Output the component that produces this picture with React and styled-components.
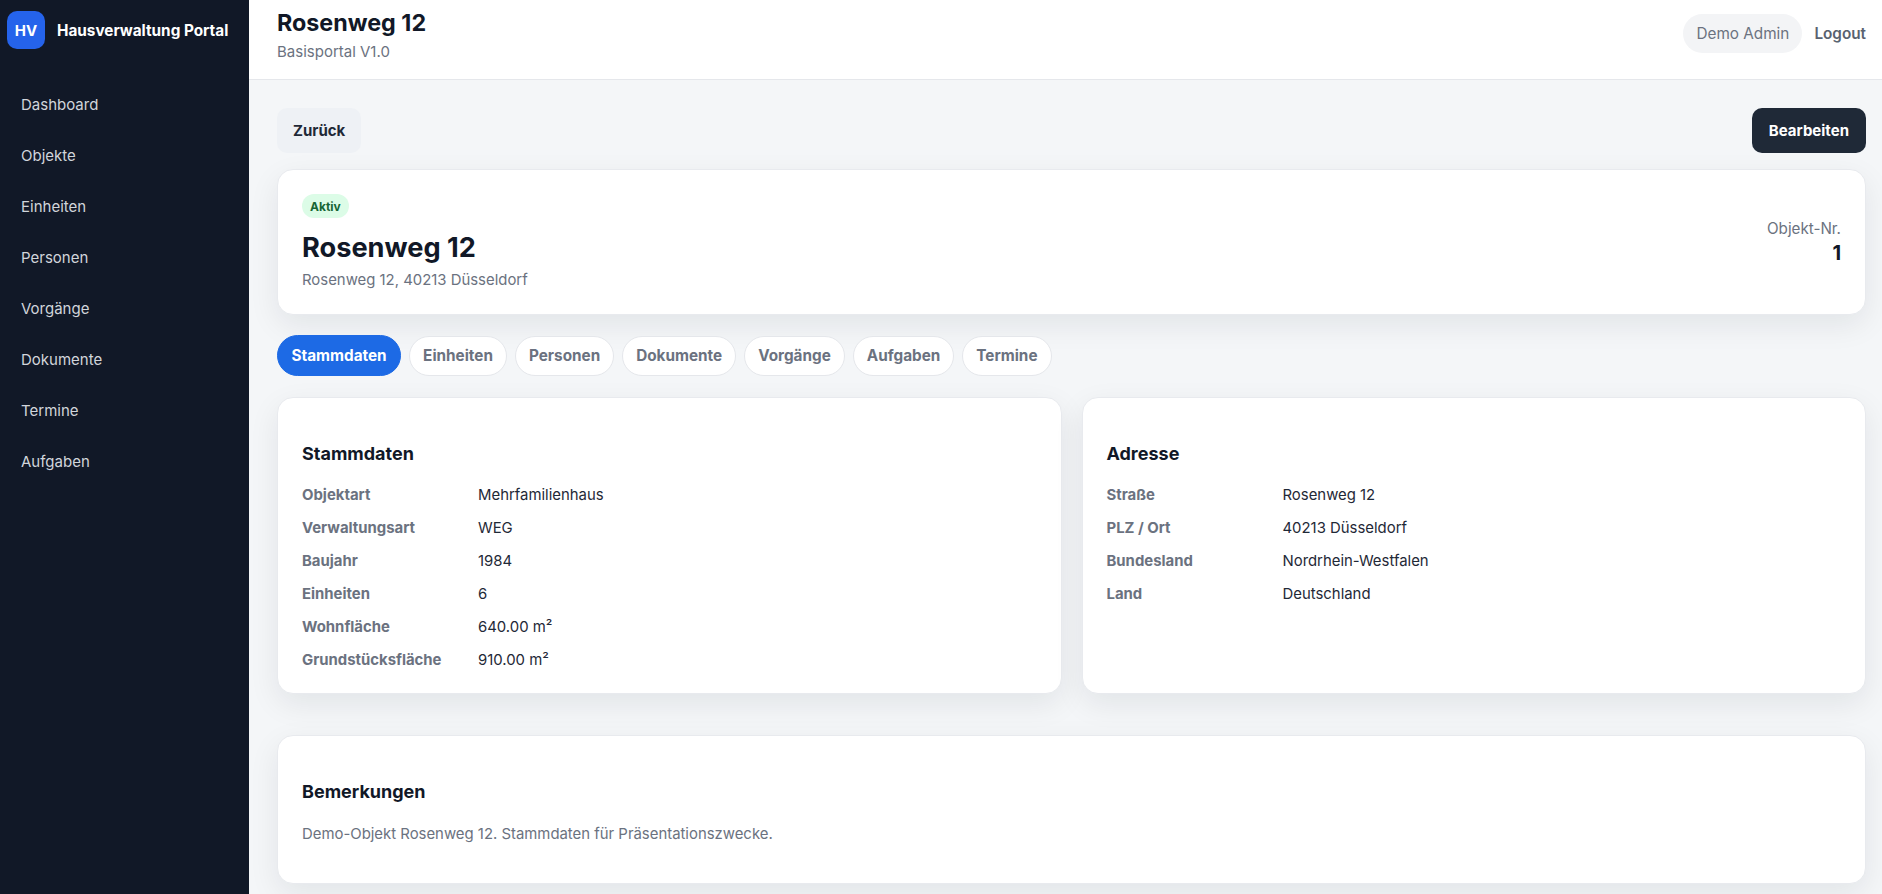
import React from "react";
import styled, { createGlobalStyle } from "styled-components";

const GlobalStyle = createGlobalStyle`
  * { box-sizing: border-box; }
  html, body { margin: 0; padding: 0; height: 100%; }
  body {
    font-family: Inter, "Liberation Sans", sans-serif;
    background: #f4f6f8;
    color: #111827;
  }
`;

const Shell = styled.div`
  display: flex;
  height: 100vh;
  overflow: hidden;
`;

const Sidebar = styled.aside`
  width: 249px;
  flex-shrink: 0;
  background: #111827;
  color: #fff;
`;

const Brand = styled.div`
  display: flex;
  align-items: center;
  gap: 12px;
  padding: 11px 7px;
`;

const BrandMark = styled.div`
  width: 38px;
  height: 38px;
  border-radius: 10px;
  background: #2563eb;
  display: flex;
  align-items: center;
  justify-content: center;
  font-size: 15px;
  font-weight: 700;
`;

const BrandName = styled.span`
  font-size: 15.3px;
  font-weight: 700;
  white-space: nowrap;
`;

const Nav = styled.nav`
  display: flex;
  flex-direction: column;
  padding: 19px 21px;
`;

const NavItem = styled.a`
  height: 51px;
  display: flex;
  align-items: center;
  font-size: 15px;
  color: #d1d5db;
`;

const Main = styled.div`
  flex: 1;
  min-width: 0;
  display: flex;
  flex-direction: column;
`;

const Topbar = styled.header`
  height: 80px;
  flex-shrink: 0;
  background: #fff;
  border-bottom: 1px solid #e5e7eb;
  display: flex;
  align-items: center;
  justify-content: space-between;
  padding: 0 16px 11px 28px;
`;

const PageTitle = styled.h1`
  margin: 0;
  font-size: 23.3px;
  line-height: 32px;
  font-weight: 700;
`;

const PageSub = styled.div`
  margin-top: 3px;
  font-size: 15px;
  line-height: 20px;
  color: #6b7280;
`;

const UserArea = styled.div`
  display: flex;
  align-items: center;
  gap: 12px;
  margin-bottom: 1px;
`;

const UserChip = styled.div`
  height: 39px;
  padding: 0 13px;
  display: flex;
  align-items: center;
  border-radius: 20px;
  background: #f3f4f6;
  font-size: 15.3px;
  color: #6b7280;
`;

const LogoutLink = styled.a`
  font-size: 15.3px;
  font-weight: 600;
  color: #596270;
`;

const Content = styled.main`
  flex: 1;
  padding: 28px 16px 0 28px;
`;

const Toolbar = styled.div`
  display: flex;
  justify-content: space-between;
  margin-bottom: 16px;
`;

const Button = styled.button`
  height: 45px;
  padding: 0 ${(p) => (p.$dark ? "17px" : "16px")};
  border: 0;
  border-radius: 10px;
  font: 700 15px Inter, sans-serif;
  background: ${(p) => (p.$dark ? "#1f2937" : "#eef1f5")};
  color: ${(p) => (p.$dark ? "#fff" : "#1f2937")};
`;

const Card = styled.section`
  background: #fff;
  border: 1px solid #e8eaee;
  border-radius: 16px;
  box-shadow: 0 10px 30px rgba(17, 24, 39, 0.08);
`;

const Hero = styled(Card)`
  height: 146px;
  padding: 24px;
  display: flex;
  justify-content: space-between;
`;

const Badge = styled.span`
  display: inline-flex;
  align-items: center;
  height: 24px;
  padding: 0 8px;
  border-radius: 12px;
  background: #dcfce7;
  color: #166534;
  font-size: 12px;
  font-weight: 700;
`;

const HeroTitle = styled.h2`
  margin: 12px 0 0;
  font-size: 27.2px;
  line-height: 36px;
  font-weight: 700;
`;

const HeroSub = styled.div`
  margin-top: 4px;
  font-size: 14.9px;
  line-height: 20px;
  color: #6b7280;
`;

const HeroMeta = styled.div`
  text-align: right;
  padding-top: 25px;
`;

const MetaLabel = styled.div`
  font-size: 15.2px;
  line-height: 20px;
  color: #6b7280;
`;

const MetaValue = styled.div`
  font-size: 20px;
  line-height: 28px;
  font-weight: 700;
`;

const Tabs = styled.div`
  display: flex;
  align-items: center;
  gap: 8px;
  margin: 20px 0 21px;
`;

const Tab = styled.a`
  height: ${(p) => (p.$active ? "41px" : "40px")};
  display: flex;
  align-items: center;
  padding: 0 ${(p) => (p.$active ? "13.5px" : "13px")};
  border-radius: 21px;
  border: 1px solid ${(p) => (p.$active ? "#1d6ae5" : "#e5e7eb")};
  background: ${(p) => (p.$active ? "#1d6ae5" : "#fff")};
  color: ${(p) => (p.$active ? "#fff" : "#6b7280")};
  font-size: 15.3px;
  font-weight: 700;
`;

const CardGrid = styled.div`
  display: grid;
  grid-template-columns: 1fr 1fr;
  gap: 20px;
  margin-bottom: 41px;
`;

const InfoCard = styled(Card)`
  height: 297px;
  padding: 43px 24px 0;
`;

const NotesCard = styled(Card)`
  height: 149px;
  padding: 43px 24px 0;
`;

const CardTitle = styled.h3`
  margin: 0 0 11px;
  font-size: 18px;
  line-height: 26px;
  font-weight: 700;
`;

const Row = styled.div`
  display: grid;
  grid-template-columns: 176px 1fr;
  height: 33px;
  align-items: center;
  font-size: 14.9px;
`;

const RowLabel = styled.span`
  font-weight: 700;
  color: #6b7280;
`;

const RowValue = styled.span`
  color: #1f2937;
`;

const NotesText = styled.p`
  margin: 19px 0 0;
  font-size: 14.9px;
  line-height: 20px;
  color: #6b7280;
`;

const navItems = ["Dashboard", "Objekte", "Einheiten", "Personen", "Vorgänge", "Dokumente", "Termine", "Aufgaben"];
const tabs = ["Stammdaten", "Einheiten", "Personen", "Dokumente", "Vorgänge", "Aufgaben", "Termine"];
const stammdaten = [
  ["Objektart", "Mehrfamilienhaus"],
  ["Verwaltungsart", "WEG"],
  ["Baujahr", "1984"],
  ["Einheiten", "6"],
  ["Wohnfläche", "640.00 m²"],
  ["Grundstücksfläche", "910.00 m²"],
];
const adresse = [
  ["Straße", "Rosenweg 12"],
  ["PLZ / Ort", "40213 Düsseldorf"],
  ["Bundesland", "Nordrhein-Westfalen"],
  ["Land", "Deutschland"],
];

const DataCard = ({ title, rows }) => (
  <InfoCard>
    <CardTitle>{title}</CardTitle>
    {rows.map(([label, value]) => (
      <Row key={label}>
        <RowLabel>{label}</RowLabel>
        <RowValue>{value}</RowValue>
      </Row>
    ))}
  </InfoCard>
);

const App = () => (
  <Shell>
    <GlobalStyle />
    <Sidebar>
      <Brand>
        <BrandMark>HV</BrandMark>
        <BrandName>Hausverwaltung Portal</BrandName>
      </Brand>
      <Nav>
        {navItems.map((item) => (
          <NavItem key={item}>{item}</NavItem>
        ))}
      </Nav>
    </Sidebar>
    <Main>
      <Topbar>
        <div>
          <PageTitle>Rosenweg 12</PageTitle>
          <PageSub>Basisportal V1.0</PageSub>
        </div>
        <UserArea>
          <UserChip>Demo Admin</UserChip>
          <LogoutLink>Logout</LogoutLink>
        </UserArea>
      </Topbar>
      <Content>
        <Toolbar>
          <Button>Zurück</Button>
          <Button $dark>Bearbeiten</Button>
        </Toolbar>
        <Hero>
          <div>
            <Badge>Aktiv</Badge>
            <HeroTitle>Rosenweg 12</HeroTitle>
            <HeroSub>Rosenweg 12, 40213 Düsseldorf</HeroSub>
          </div>
          <HeroMeta>
            <MetaLabel>Objekt-Nr.</MetaLabel>
            <MetaValue>1</MetaValue>
          </HeroMeta>
        </Hero>
        <Tabs>
          {tabs.map((tab, i) => (
            <Tab key={tab} $active={i === 0}>{tab}</Tab>
          ))}
        </Tabs>
        <CardGrid>
          <DataCard title="Stammdaten" rows={stammdaten} />
          <DataCard title="Adresse" rows={adresse} />
        </CardGrid>
        <NotesCard>
          <CardTitle>Bemerkungen</CardTitle>
          <NotesText>Demo-Objekt Rosenweg 12. Stammdaten für Präsentationszwecke.</NotesText>
        </NotesCard>
      </Content>
    </Main>
  </Shell>
);

export default App;
